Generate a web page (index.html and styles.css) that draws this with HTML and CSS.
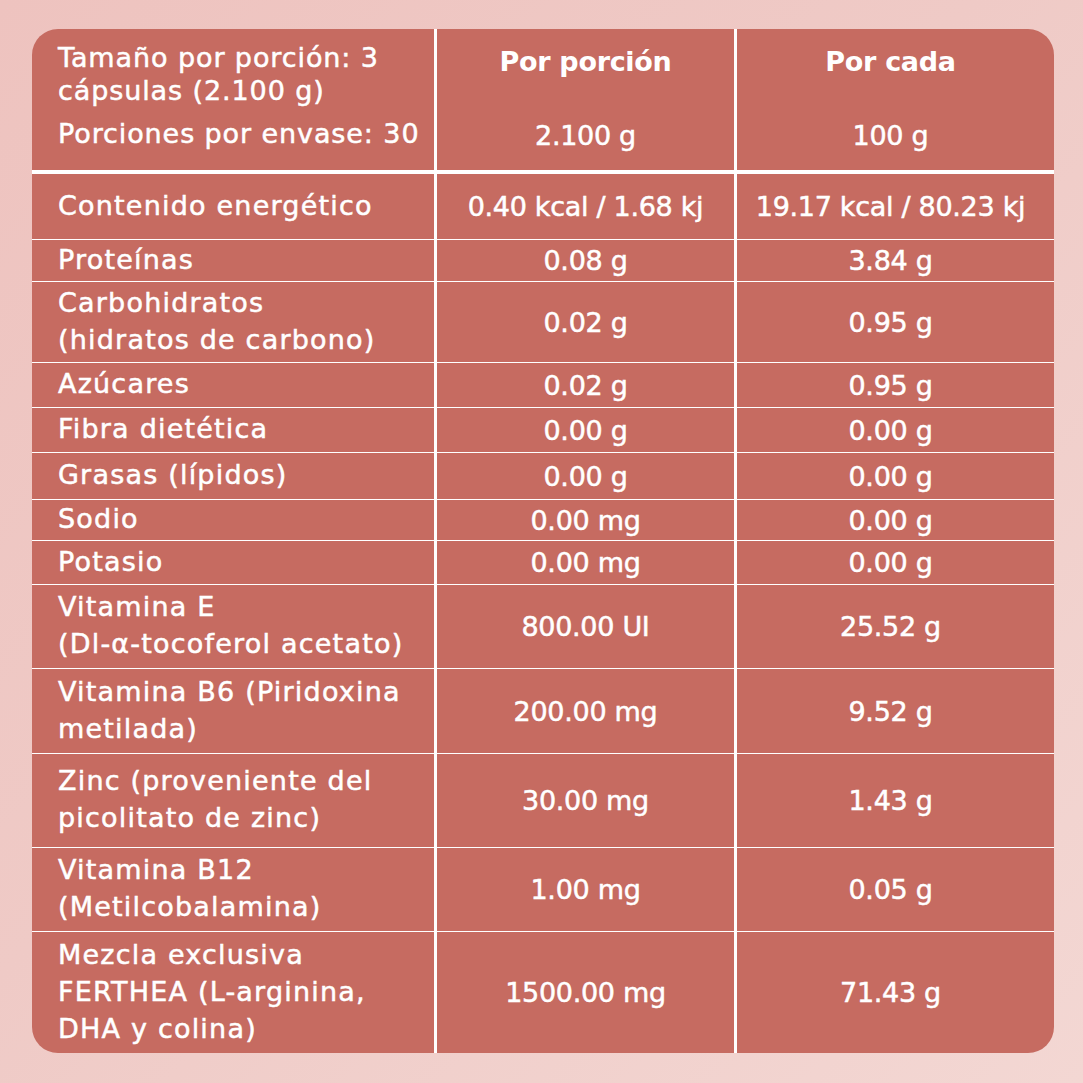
FILE: index.html
```html
<!DOCTYPE html>
<html lang="es">
<head>
<meta charset="utf-8">
<title>Información nutrimental</title>
<link rel="stylesheet" href="styles.css">
</head>
<body>
<div class="page">
  <div class="card">
    <div class="cell c1 head-info">
      <p class="serving">Tamaño por porción: 3<br>cápsulas (2.100 g)</p>
      <p class="portions">Porciones por envase: 30</p>
    </div>
    <div class="cell c2 head-col">
      <span class="head-label">Por porción</span>
      <span class="head-value">2.100 g</span>
    </div>
    <div class="cell c3 head-col">
      <span class="head-label">Por cada</span>
      <span class="head-value">100 g</span>
    </div>

    <div class="cell c1">Contenido energético</div>
    <div class="cell c2">0.40 kcal / 1.68 kj</div>
    <div class="cell c3">19.17 kcal / 80.23 kj</div>

    <div class="cell c1">Proteínas</div>
    <div class="cell c2">0.08 g</div>
    <div class="cell c3">3.84 g</div>

    <div class="cell c1">Carbohidratos<br>(hidratos de carbono)</div>
    <div class="cell c2">0.02 g</div>
    <div class="cell c3">0.95 g</div>

    <div class="cell c1">Azúcares</div>
    <div class="cell c2">0.02 g</div>
    <div class="cell c3">0.95 g</div>

    <div class="cell c1">Fibra dietética</div>
    <div class="cell c2">0.00 g</div>
    <div class="cell c3">0.00 g</div>

    <div class="cell c1">Grasas (lípidos)</div>
    <div class="cell c2">0.00 g</div>
    <div class="cell c3">0.00 g</div>

    <div class="cell c1">Sodio</div>
    <div class="cell c2">0.00 mg</div>
    <div class="cell c3">0.00 g</div>

    <div class="cell c1">Potasio</div>
    <div class="cell c2">0.00 mg</div>
    <div class="cell c3">0.00 g</div>

    <div class="cell c1">Vitamina E<br>(Dl-α-tocoferol acetato)</div>
    <div class="cell c2">800.00 UI</div>
    <div class="cell c3">25.52 g</div>

    <div class="cell c1">Vitamina B6 (Piridoxina<br>metilada)</div>
    <div class="cell c2">200.00 mg</div>
    <div class="cell c3">9.52 g</div>

    <div class="cell c1">Zinc (proveniente del<br>picolitato de zinc)</div>
    <div class="cell c2">30.00 mg</div>
    <div class="cell c3">1.43 g</div>

    <div class="cell c1">Vitamina B12<br>(Metilcobalamina)</div>
    <div class="cell c2">1.00 mg</div>
    <div class="cell c3">0.05 g</div>

    <div class="cell c1 last">Mezcla exclusiva<br>FERTHEA (L-arginina,<br>DHA y colina)</div>
    <div class="cell c2 last">1500.00 mg</div>
    <div class="cell c3 last">71.43 g</div>
  </div>
</div>
</body>
</html>
```
FILE: styles.css
```css
html, body {
  margin: 0;
  padding: 0;
}

body {
  width: 1083px;
  height: 1083px;
  overflow: hidden;
  background: linear-gradient(135deg, #eec3bf 0%, #efcac6 45%, #f3d7d3 100%);
  font-family: "DejaVu Sans", "Liberation Sans", sans-serif;
  color: #ffffff;
}

.page {
  padding: 29px 0 0 32px;
}

.card {
  width: 1022px;
  height: 1024px;
  background: #c66b61;
  border-radius: 26px;
  overflow: hidden;
  display: grid;
  grid-template-columns: 405px 300px 317px;
  grid-template-rows: 145px 66px 42px 81px 45px 45px 47px 41px 44px 84px 85px 94px 84px 121px;
}

.cell {
  box-sizing: border-box;
  display: flex;
  align-items: center;
  border-bottom: 1.5px solid #ffffff;
  font-size: 27px;
  line-height: 37px;
  white-space: nowrap;
  -webkit-text-stroke: 0.5px #ffffff;
}

.cell.last {
  border-bottom: none;
}

.c1 {
  padding-left: 26px;
  padding-bottom: 3px;
  border-right: 3px solid #ffffff;
  letter-spacing: 1.2px;
}

.c2 {
  justify-content: center;
  border-right: 3px solid #ffffff;
  letter-spacing: -0.3px;
}

.c3 {
  justify-content: center;
  padding-right: 10px;
  letter-spacing: -0.3px;
}

.head-info {
  flex-direction: column;
  align-items: flex-start;
  justify-content: flex-start;
  padding-top: 12px;
  padding-bottom: 0;
  border-bottom: 4px solid #ffffff;
  line-height: 33px;
  letter-spacing: 0.9px;
}

.head-info p {
  margin: 0;
}

.portions {
  margin-top: 10px !important;
}

.head-col {
  flex-direction: column;
  justify-content: flex-start;
  padding-top: 16px;
  border-bottom: 4px solid #ffffff;
  line-height: 33px;
}

.head-label {
  font-weight: 700;
  letter-spacing: -0.3px;
  -webkit-text-stroke: 0;
}

.head-value {
  margin-top: 41px;
}
```
